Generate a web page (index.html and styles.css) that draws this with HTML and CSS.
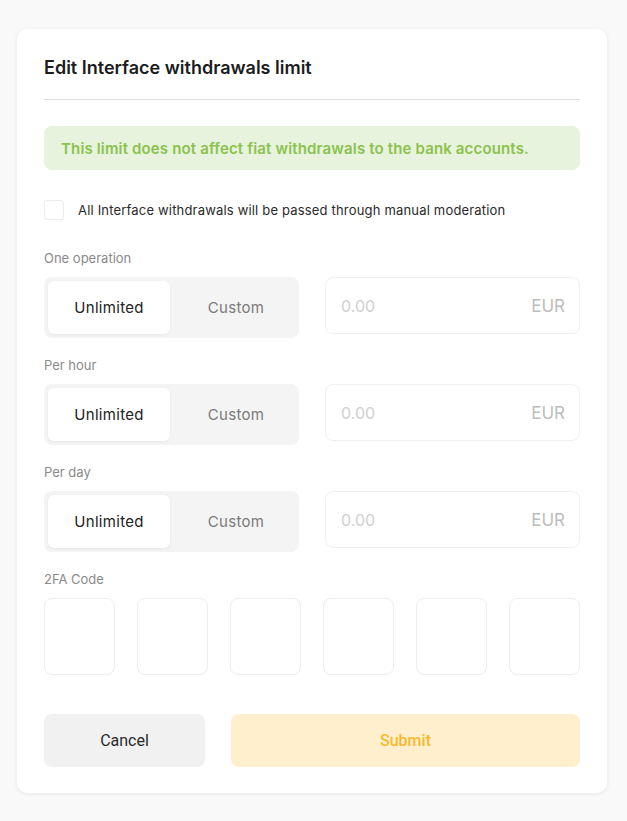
FILE: index.html
```html
<!DOCTYPE html>
<html lang="en">
<head>
<meta charset="utf-8">
<title>Edit Interface withdrawals limit</title>
<link rel="stylesheet" href="styles.css">
</head>
<body>
<div class="card">
  <div class="card-header">
    <h1 class="title">Edit Interface withdrawals limit</h1>
  </div>
  <div class="alert">This limit does not affect fiat withdrawals to the bank accounts.</div>
  <label class="check-row">
    <span class="checkbox"></span>
    <span class="check-text">All Interface withdrawals will be passed through manual moderation</span>
  </label>

  <div class="field">
    <div class="label">One operation</div>
    <div class="limit-row">
      <div class="segment">
        <div class="seg-btn active">Unlimited</div>
        <div class="seg-btn">Custom</div>
      </div>
      <div class="amount">
        <span class="placeholder">0.00</span>
        <span class="currency">EUR</span>
      </div>
    </div>
  </div>

  <div class="field">
    <div class="label">Per hour</div>
    <div class="limit-row">
      <div class="segment">
        <div class="seg-btn active">Unlimited</div>
        <div class="seg-btn">Custom</div>
      </div>
      <div class="amount">
        <span class="placeholder">0.00</span>
        <span class="currency">EUR</span>
      </div>
    </div>
  </div>

  <div class="field">
    <div class="label">Per day</div>
    <div class="limit-row">
      <div class="segment">
        <div class="seg-btn active">Unlimited</div>
        <div class="seg-btn">Custom</div>
      </div>
      <div class="amount">
        <span class="placeholder">0.00</span>
        <span class="currency">EUR</span>
      </div>
    </div>
  </div>

  <div class="field">
    <div class="label">2FA Code</div>
    <div class="code-row">
      <div class="code-box"></div>
      <div class="code-box"></div>
      <div class="code-box"></div>
      <div class="code-box"></div>
      <div class="code-box"></div>
      <div class="code-box"></div>
    </div>
  </div>

  <div class="actions">
    <button class="btn btn-cancel">Cancel</button>
    <button class="btn btn-submit">Submit</button>
  </div>
</div>
</body>
</html>
```

FILE: styles.css
```css
* { box-sizing: border-box; }
html, body { margin: 0; padding: 0; }
body {
  background: #f9f9f9;
  font-family: Inter, "Noto Sans", "Liberation Sans", sans-serif;
  color: #222;
  padding: 29px 20px 28px 17px;
}
.card {
  width: 590px;
  background: #fff;
  border-radius: 10px;
  box-shadow: 0 1px 4px rgba(0,0,0,0.07);
  padding: 27px 27px 26px 27px;
}
.card-header {
  border-bottom: 1px solid #dedede;
  padding-bottom: 19px;
}
.title {
  margin: 0;
  font-size: 18px;
  line-height: 24px;
  font-weight: 600;
  color: #1c1c1c;
}
.alert {
  margin-top: 26px;
  height: 44px;
  background: #e7f3dc;
  border-radius: 8px;
  padding: 0 17px;
  display: flex;
  align-items: center;
  font-size: 15px;
  font-weight: 600;
  letter-spacing: 0.15px;
  color: #8bc24f;
}
.check-row {
  margin-top: 30px;
  display: flex;
  align-items: center;
  gap: 14px;
  height: 20px;
}
.checkbox {
  width: 20px;
  height: 20px;
  border: 1px solid #ececec;
  border-radius: 3px;
  flex: none;
}
.check-text {
  font-size: 13px;
  letter-spacing: 0.18px;
  color: #2a2a2a;
}
.field { margin-top: 30px; }
.field + .field { margin-top: 19px; }
.label {
  font-size: 13px;
  line-height: 16px;
  color: #8a8a8a;
  margin-bottom: 11px;
}
.limit-row {
  display: flex;
  align-items: flex-start;
  gap: 26px;
}
.segment {
  width: 255px;
  height: 61px;
  background: #f4f4f4;
  border-radius: 8px;
  padding: 4px;
  display: flex;
}
.seg-btn {
  height: 53px;
  display: flex;
  align-items: center;
  justify-content: center;
  font-size: 15px;
  letter-spacing: 0.3px;
  color: #7a7a7a;
  border-radius: 6px;
  flex: 1;
  padding-left: 7px;
}
.seg-btn.active {
  flex: none;
  width: 122px;
  padding-left: 0;
  background: #fff;
  color: #222;
  box-shadow: 0 1px 3px rgba(0,0,0,0.06);
}
.amount {
  flex: 1;
  height: 57px;
  border: 1px solid #f0f0f0;
  border-radius: 8px;
  display: flex;
  align-items: center;
  justify-content: space-between;
  padding: 0 14px 0 15px;
  font-size: 16px;
}
.placeholder { color: #cfcfcf; }
.currency { color: #bdbdbd; font-size: 17px; }
.code-row {
  display: flex;
  gap: 22px;
}
.code-box {
  flex: 1;
  height: 77px;
  border: 1px solid #ededed;
  border-radius: 8px;
}
.actions {
  margin-top: 39px;
  display: flex;
  gap: 26px;
}
.btn {
  height: 53px;
  border: none;
  border-radius: 8px;
  font-family: Roboto, "Liberation Sans", sans-serif;
  font-size: 16px;
}
.btn-cancel {
  width: 161px;
  background: #f1f1f1;
  color: #2a2a2a;
}
.btn-submit {
  flex: 1;
  background: #ffefcc;
  color: #f7b92f;
  font-weight: 500;
}
```
